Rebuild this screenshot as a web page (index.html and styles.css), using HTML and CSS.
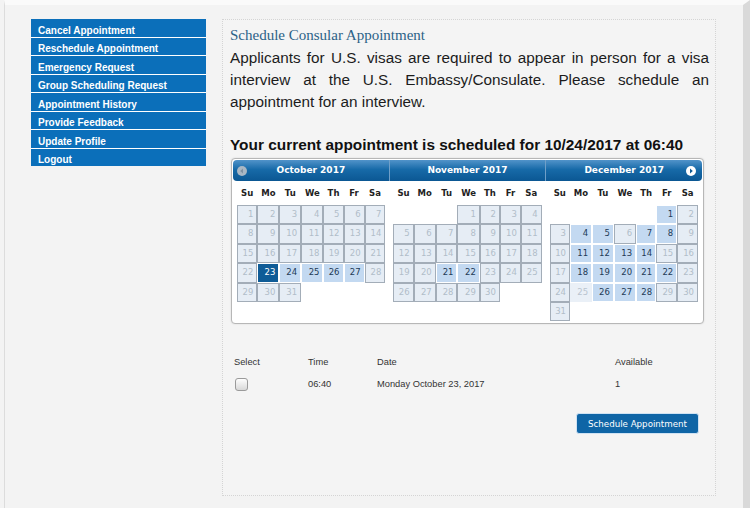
FILE: index.html
```
<!DOCTYPE html>
<html lang="en">
<head>
  <meta charset="UTF-8">
  <meta name="viewport" content="width=device-width, initial-scale=1.0">
  <title>Schedule Consular Appointment</title>
  <link rel="stylesheet" href="styles.css">
</head>
<body>
  <div class="frame">
    <ul class="side-menu">
      <li><a href="#">Cancel Appointment</a></li>
      <li><a href="#">Reschedule Appointment</a></li>
      <li><a href="#">Emergency Request</a></li>
      <li><a href="#">Group Scheduling Request</a></li>
      <li><a href="#">Appointment History</a></li>
      <li><a href="#">Provide Feedback</a></li>
      <li><a href="#">Update Profile</a></li>
      <li><a href="#">Logout</a></li>
    </ul>

    <section class="panel">
      <h2 class="panel-title">Schedule Consular Appointment</h2>
      <p class="intro">Applicants for U.S. visas are required to appear in person for a visa interview at the U.S. Embassy/Consulate. Please schedule an appointment for an interview.</p>
      <h3 class="current">Your current appointment is scheduled for 10/24/2017 at 06:40</h3>

      <div class="datepicker">
        <div class="cal-head">
          <span class="nav prev">
            <svg width="10" height="10" viewBox="0 0 10 10"><circle cx="5" cy="5" r="5" fill="#a9b7c4"/><path d="M6 2.6 L3.2 5 L6 7.4 Z" fill="#7f91a2"/></svg>
          </span>
          <div class="cal-title">October 2017</div>
          <div class="cal-title">November 2017</div>
          <div class="cal-title">December 2017</div>
          <span class="nav next">
            <svg width="10" height="10" viewBox="0 0 10 10"><circle cx="5" cy="5" r="5" fill="#fff"/><path d="M4 2.6 L6.8 5 L4 7.4 Z" fill="#0e5a94"/></svg>
          </span>
        </div>
        <div class="cal-body" id="calBody"></div>
      </div>

      <table class="slots">
        <tr>
          <th class="col-select">Select</th>
          <th class="col-time">Time</th>
          <th class="col-date">Date</th>
          <th>Available</th>
        </tr>
        <tr>
          <td><input type="checkbox" class="check"></td>
          <td>06:40</td>
          <td>Monday October 23, 2017</td>
          <td>1</td>
        </tr>
      </table>

      <div class="actions">
        <button class="btn">Schedule Appointment</button>
      </div>
    </section>
  </div>

  <script>
    const months = [
      { start: 0, days: 31, open: [24, 25, 26, 27], picked: 23 },
      { start: 3, days: 30, open: [21, 22] },
      { start: 5, days: 31, open: [1, 4, 5, 7, 8, 11, 12, 13, 14, 18, 19, 20, 21, 22, 26, 27, 28], off: [25] }
    ];
    const dayNames = ['Su', 'Mo', 'Tu', 'We', 'Th', 'Fr', 'Sa'];

    function renderMonths() {
      const body = document.getElementById('calBody');
      months.forEach(m => {
        const grid = document.createElement('div');
        grid.className = 'month';
        let html = dayNames.map(d => `<span class="dow">${d}</span>`).join('');
        for (let i = 0; i < m.start; i++) html += '<span></span>';
        for (let d = 1; d <= m.days; d++) {
          let cls = 'day';
          if (d === m.picked) cls += ' picked';
          else if (m.open.includes(d)) cls += ' open';
          else if (m.off && m.off.includes(d)) cls += ' off';
          else cls += ' closed';
          html += `<a class="${cls}" href="#">${d}</a>`;
        }
        grid.innerHTML = html;
        body.appendChild(grid);
      });
    }

    renderMonths();
  </script>
</body>
</html>
```

FILE: styles.css
```
body {
  margin: 0;
  background: #f3f3f3;
  font-family: "Liberation Sans", Arial, sans-serif;
  color: #222;
}
.frame {
  display: flex;
  align-items: flex-start;
  min-height: 508px;
  box-sizing: border-box;
  margin-left: 4px;
  padding-top: 14px;
  border-top: 5px solid #fafafa;
  border-left: 1px solid #dcdcdc;
  border-right: 7px solid #d9d9d9;
}
.side-menu {
  list-style: none;
  margin: 0 0 0 26px;
  padding: 0;
  width: 175px;
  background: #0b6fba;
}
.side-menu li {
  border-bottom: 1px solid #fff;
}
.side-menu li:last-child {
  border-bottom: none;
}
.side-menu a {
  display: block;
  padding: 4.5px 0 0 7px;
  line-height: 13px;
  font-size: 10px;
  font-weight: bold;
  color: #fff;
  text-decoration: none;
}
.panel {
  margin-left: 16px;
  width: 494px;
  height: 477px;
  box-sizing: border-box;
  padding: 6px 6px 0 7px;
  border: 1px dotted #d4d4d4;
  background: #f4f4f4;
}
.panel-title {
  margin: 0;
  font-family: "Liberation Serif", "Times New Roman", serif;
  font-size: 15px;
  font-weight: normal;
  line-height: 18px;
  color: #2b6287;
}
.intro {
  margin: 3px 0 0;
  font-size: 15.3px;
  line-height: 22px;
  text-align: justify;
  color: #1c1c1c;
}
.current {
  margin: 23px 0 0;
  font-size: 15.4px;
  line-height: 18px;
  color: #111;
}
.datepicker {
  margin: 4px 5px 0 1px;
  padding: 1px 1px 2px;
  background: #fff;
  border: 1px solid #b7b7b7;
  border-radius: 4px;
  box-shadow: 0 0 2px rgba(0,0,0,0.12);
}
.cal-head {
  position: relative;
  display: flex;
  height: 21px;
  border-radius: 4px;
  background: linear-gradient(#5193c9, #176aa8 45%, #0b5793);
}
.cal-title {
  flex: 1;
  text-align: center;
  line-height: 21px;
  font-family: "DejaVu Sans", Verdana, sans-serif;
  font-size: 9px;
  font-weight: bold;
  color: #fff;
}
.cal-title + .cal-title {
  border-left: 1px solid #6f9fc8;
}
.nav {
  position: absolute;
  top: 5.5px;
  width: 10px;
  height: 10px;
}
.nav svg {
  display: block;
}
.prev {
  left: 4px;
}
.next {
  right: 6px;
}
.cal-body {
  display: flex;
  align-items: flex-start;
}
.month {
  flex: 1;
  display: grid;
  grid-template-columns: 20.3fr 22fr 21.7fr 22.3fr 20fr 21fr 20.7fr;
  grid-template-rows: 24px;
  grid-auto-rows: 19.4px;
  padding: 0 4px;
}
.dow {
  text-align: center;
  line-height: 24px;
  font-family: "DejaVu Sans", Verdana, sans-serif;
  font-size: 8.5px;
  font-weight: bold;
  color: #222;
}
.day {
  display: block;
  border: 1px solid #fff;
  padding-right: 3px;
  text-align: right;
  line-height: 17.4px;
  font-family: "DejaVu Sans", Verdana, sans-serif;
  font-size: 8.5px;
  text-decoration: none;
}
.day.closed {
  background: #e6edf5;
  border-color: #a3adb8;
  color: #b1bdc9;
}
.day.off {
  background: #eaf0f7;
  border-color: #eaf0f7;
  color: #b9c4cf;
}
.day.open {
  background: #c3d9f1;
  color: #1e3a56;
}
.day.picked {
  background: #0f5c97;
  color: #fff;
}
.slots {
  margin-top: 27px;
  border-collapse: collapse;
  font-size: 9.3px;
  color: #333;
}
.slots th,
.slots td {
  padding: 0 4px;
  height: 22px;
  text-align: left;
  font-weight: normal;
}
.col-select {
  width: 66px;
}
.col-time {
  width: 61px;
}
.col-date {
  width: 230px;
}
.check {
  -webkit-appearance: none;
  appearance: none;
  display: block;
  margin: 0 0 0 1px;
  width: 13px;
  height: 13px;
  border: 1px solid #9a9a9a;
  border-radius: 3px;
  background: linear-gradient(#fdfdfd, #d8d8d8);
  box-sizing: border-box;
}
.actions {
  display: flex;
  justify-content: flex-end;
  margin-top: 18px;
  padding-right: 10px;
}
.btn {
  height: 21px;
  padding: 0 11px;
  border: 1px solid #cfe2f3;
  border-radius: 3px;
  background: #0f65a6;
  color: #fff;
  font-family: "DejaVu Sans", Verdana, sans-serif;
  font-size: 8.7px;
}
```
